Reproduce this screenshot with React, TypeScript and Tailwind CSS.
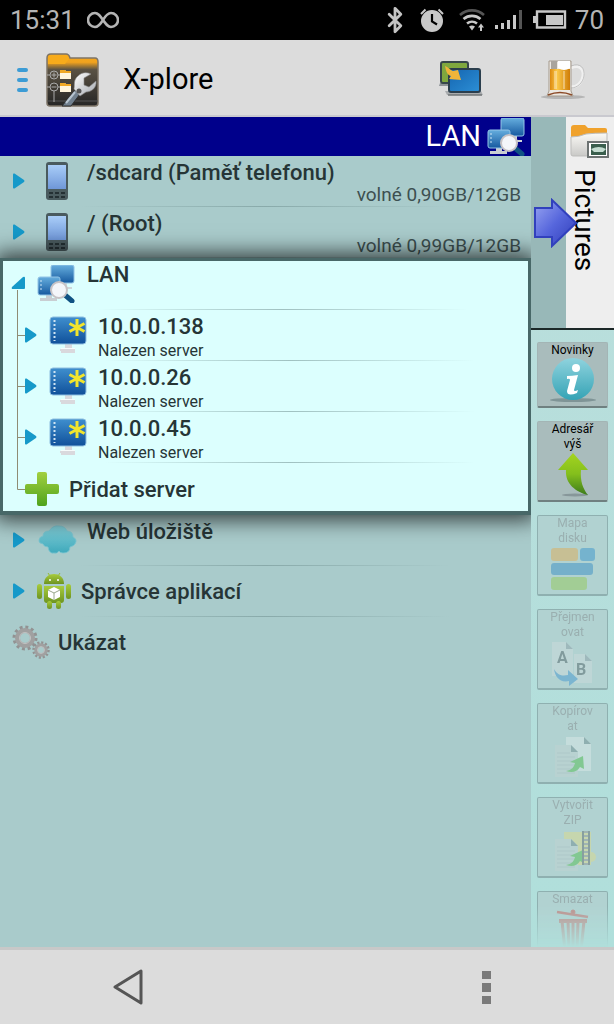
import type { ReactNode } from 'react';
import clsx from 'clsx';
import { Bluetooth } from 'lucide-react';

/* ---------- status bar icons ---------- */

function StatusIcons() {
  return (
    <div className="flex items-center">
      <Bluetooth width={28} height={28} stroke="#c4c4c4" strokeWidth={2.4} />
      <svg className="ml-2.5" width="26" height="26" viewBox="0 0 26 26" fill="none">
        <circle cx="13" cy="14" r="11" fill="#c8c8c8" />
        <path d="M2 7 6.500 2.500M24 7l-4.500-4.500" stroke="#c8c8c8" strokeWidth="2" />
        <path d="M13 7v7.500l5 3" stroke="#000" strokeWidth="2.200" />
      </svg>
      <svg className="ml-3.5" width="28" height="24" viewBox="0 0 28 24" fill="none" strokeWidth="2.600">
        <path d="M1 7a18 18 0 0 1 24 0" stroke="#555" />
        <path d="M4.500 11a13 13 0 0 1 17 0M8 15.500a8 8 0 0 1 10 0" stroke="#c8c8c8" />
        <path d="M10 18.500a5 5 0 0 1 6 0l-3 4z" fill="#c8c8c8" />
        <path d="M22 23v-5" stroke="#c8c8c8" strokeWidth="2" />
        <path d="m19 19.500 3-4 3 4z" fill="#c8c8c8" />
      </svg>
      <svg className="ml-2" width="28" height="20" viewBox="0 0 28 20" fill="#c8c8c8">
        <path d="M0 15h3v4H0zM6 13h3v6H6zM12 10h3v9h-3zM18 5h3v14h-3z" />
        <path d="M24 0h3v19h-3z" fill="#555" />
      </svg>
      <svg className="ml-2.5" width="34" height="20" viewBox="0 0 34 20" fill="none">
        <path d="M4 1.500h28v16H4z" stroke="#c8c8c8" strokeWidth="2.400" />
        <path d="M0 6h3v7H0zM13 5h17v10H13z" fill="#c8c8c8" />
      </svg>
    </div>
  );
}

function InfinityIcon() {
  return (
    <svg width="32" height="18" viewBox="0 0 32 18" fill="none" stroke="#b4b4b4" strokeWidth="2.600">
      <path d="M16 9C12.500 4 11 2 8 2a7 7 0 0 0 0 14c3 0 5-2 8-7s5-7 8-7a7 7 0 0 1 0 14c-3 0-4.500-2-8-7Z" />
    </svg>
  );
}

/* ---------- app bar icons ---------- */

function AppLogo() {
  return (
    <svg width="53" height="54" viewBox="0 0 53 54">
      <defs>
        <linearGradient id="logoDark" x1="0" y1="0" x2="0" y2="1">
          <stop offset="0" stopColor="#f5a81c" />
          <stop offset=".16" stopColor="#f0a21e" />
          <stop offset=".3" stopColor="#5a5244" />
          <stop offset="1" stopColor="#262626" />
        </linearGradient>
        <linearGradient id="logoSteel" x1="0" y1="0" x2="1" y2="1">
          <stop offset="0" stopColor="#fff" />
          <stop offset="1" stopColor="#a5aab0" />
        </linearGradient>
      </defs>
      <path d="M1 5q0-4 4-4h15q3 0 4 4h25q3 0 3 4v41q0 3-3 3H4q-3 0-3-3z" fill="url(#logoDark)" stroke="#7d7467" strokeWidth="1.500" />
      <path d="M2 5q0-3 3-3h15q2 0 3 4l-4 5H2z" fill="#f7ab1b" />
      <path d="M1 48h51" stroke="#555" />
      <g stroke="#aaa" fill="none">
        <path d="M1 22h3m8 0h4M1 34h3m8 0h4M8 38v11M5.500 22h5M8 19.500v5M5.500 34h5" />
        <circle cx="8" cy="22" r="4" />
        <circle cx="8" cy="34" r="4" />
      </g>
      <path d="M14 17h5l1 1h5v8H14zM14 30h5l1 1h5v8H14z" fill="#fff5dc" />
      <path d="M14 17h5l1 1h5v2H14zM14 30h5l1 1h5v2H14z" fill="#f0a825" />
      <path d="M16 53 29 37l5 4-9 12z" fill="#71808e" stroke="#303030" />
      <path d="m20 50 9-11" stroke="#b7c4d0" strokeWidth="2" />
      <path d="M28 36c1-4-1-9 4-13 4-4 9-4 13-2l-7 4v7l5 2 7-6c1 7-5 11-10 11l-6 4z" fill="url(#logoSteel)" stroke="#888" strokeWidth=".6" />
      <circle cx="33" cy="38" r="2.500" fill="#555" />
    </svg>
  );
}

function ScreensIcon() {
  return (
    <svg width="45" height="38" viewBox="0 0 45 38">
      <defs>
        <linearGradient id="scrBlue" x1="0" y1="0" x2="1" y2="1">
          <stop offset="0" stopColor="#1565b0" />
          <stop offset="1" stopColor="#2c8fd6" />
        </linearGradient>
      </defs>
      <path d="M1 22h12v3H0z" fill="#8d9296" />
      <rect x="2" y="1" width="27" height="21" rx="2" fill="#7fa83e" stroke="#37474a" strokeWidth="2" />
      <path d="M6 30h36l2 4H8z" fill="#a9acae" />
      <path d="M9 34h34" stroke="#707476" strokeWidth="1.500" />
      <rect x="10" y="8" width="31" height="23" rx="2" fill="url(#scrBlue)" stroke="#2b3e4d" strokeWidth="2" />
      <path d="M6 5c3 1 5 4 8 5l5-1 3 10-12-1 2-3C8 14 7 10 6 5z" fill="#eeb53a" />
    </svg>
  );
}

function BeerIcon() {
  return (
    <svg width="46" height="42" viewBox="0 0 46 42">
      <defs>
        <linearGradient id="beer" x1="0" y1="0" x2="1" y2="0">
          <stop offset="0" stopColor="#dd8a10" />
          <stop offset=".35" stopColor="#fbc94a" />
          <stop offset="1" stopColor="#cf7d08" />
        </linearGradient>
      </defs>
      <ellipse cx="23" cy="38" rx="22" ry="2" fill="#b5b5b5" />
      <path d="M31 9c8-4 13 1 12 8s-6 11-12 11" fill="none" stroke="#f0f0f0" strokeWidth="3" />
      <path d="M31 7c10-4 14 3 13 10s-7 12-13 12" fill="none" stroke="#b4b4b4" strokeWidth=".8" />
      <path d="M9 2h22v30l2 5H7l2-5z" fill="#ece8e2" stroke="#a59a8d" />
      <path d="M10 10h20v21H10z" fill="url(#beer)" />
      <path d="M11 2h6v8h-6z" fill="#a9a49c" />
      <path d="M14 12h3v18h-3zM23 12h2v18h-2z" fill="#fff" opacity=".35" />
      <path d="M18 2h12v7q-6 4-12 0z" fill="#fff" />
      <path d="M8 36q12-5 24 0" stroke="#8b4a28" strokeWidth="1.500" fill="none" />
    </svg>
  );
}

/* ---------- tree icons ---------- */

function Arrow() {
  return (
    <svg className="shrink-0" width="12" height="16" viewBox="0 0 12 16">
      <path d="M0 1.500Q0 0 1.500.6L11 7q1 1 0 2l-9.500 6.400Q0 16 0 14.500z" fill="#1699c9" />
    </svg>
  );
}

function PhoneIcon() {
  return (
    <svg width="22" height="38" viewBox="0 0 22 38">
      <defs>
        <linearGradient id="phoneScreen" x1="0" y1="0" x2="0" y2="1">
          <stop offset="0" stopColor="#a9cdf8" />
          <stop offset="1" stopColor="#6f97d8" />
        </linearGradient>
      </defs>
      <rect width="22" height="38" rx="3" fill="#4a5b5f" />
      <rect x="2" y="3" width="18" height="24" fill="url(#phoneScreen)" />
      <path d="M3 30h4v2H3zm6 0h4v2H9zm6 0h4v2h-4zM3 34h4v2H3zm6 0h4v2H9zm6 0h4v2h-4z" fill="#243034" />
    </svg>
  );
}

function LanIcon() {
  return (
    <svg width="38" height="38" viewBox="0 0 38 38">
      <defs>
        <linearGradient id="lanBlue" x1="0" y1="0" x2="0" y2="1">
          <stop offset="0" stopColor="#66aede" />
          <stop offset="1" stopColor="#16599f" />
        </linearGradient>
      </defs>
      <path d="M25 17h5v5h5v2H20v-2h5z" fill="#cfd6da" />
      <rect x="14" y="0" width="23" height="18" rx="2" fill="url(#lanBlue)" stroke="#93c4e6" />
      <path d="M9 29h6v4h5v3H3v-3h6z" fill="#c9ced2" />
      <rect x="1" y="12" width="22" height="18" rx="2" fill="url(#lanBlue)" stroke="#93c4e6" />
      <path d="M4 15v12" stroke="#cfe6f5" strokeDasharray="2 2" />
      <path d="m28 30 7 6" stroke="#0f5283" strokeWidth="5" strokeLinecap="round" />
      <circle cx="22" cy="25" r="8" fill="#f4f6fa" stroke="#c7c3c6" strokeWidth="2" />
    </svg>
  );
}

function ServerIcon() {
  return (
    <svg className="shrink-0" width="38" height="38" viewBox="0 0 38 38">
      <defs>
        <linearGradient id="srvBlue" x1="0" y1="0" x2="0" y2="1">
          <stop offset="0" stopColor="#3f8fce" />
          <stop offset="1" stopColor="#10509a" />
        </linearGradient>
      </defs>
      <path d="M16 28h7v4h3v5H12v-2h-1v-2h5z" fill="#d9d9dd" />
      <path d="M12 32.500h14" stroke="#f7fbfb" />
      <rect x="1" y="1" width="36" height="27" rx="3" fill="url(#srvBlue)" stroke="#8fbfe0" />
      <path d="M5.500 4v21" stroke="#cfe3f2" strokeWidth="2" strokeDasharray="2 2" />
      <path d="M28 3v17M20.500 7.500l15 8M35.500 7.500l-15 8" stroke="#f2e52c" strokeWidth="3" />
    </svg>
  );
}

function CloudIcon() {
  return (
    <svg width="39" height="30" viewBox="0 0 39 30">
      <defs>
        <linearGradient id="cloud" x1="0" y1="0" x2="0" y2="1">
          <stop offset="0" stopColor="#84d2dc" />
          <stop offset="1" stopColor="#3fa9bb" />
        </linearGradient>
      </defs>
      <path
        d="M11 6Q15 0 21 1q6 0 8 5 6 0 6 6 4 2 3 5-1 4-6 5 0 6-7 6-3 0-4-2-2 3-5 2-5 1-6-6-4 0-5-3-5-1-4-4 0-3 4-4 0-5 6-5z"
        fill="url(#cloud)"
        stroke="#7cc5d0"
        strokeWidth=".8"
      />
    </svg>
  );
}

function AndroidIcon() {
  return (
    <svg width="34" height="38" viewBox="0 0 34 38">
      <defs>
        <linearGradient id="droid" x1="0" y1="0" x2="0" y2="1">
          <stop offset="0" stopColor="#a8cc3c" />
          <stop offset="1" stopColor="#6d9420" />
        </linearGradient>
      </defs>
      <path d="m11 1 2 3m10-3-2 3" stroke="#94b934" />
      <g fill="url(#droid)">
        <path d="M7 12C7 5 12 2 17 2s10 3 10 10z" />
        <path d="M7 14h20v14q0 3-3 3H10q-3 0-3-3z" />
        <rect x="0" y="12" width="5" height="15" rx="2.500" />
        <rect x="29" y="12" width="5" height="15" rx="2.500" />
        <rect x="10" y="29" width="5" height="8" rx="2.500" />
        <rect x="19" y="29" width="5" height="8" rx="2.500" />
      </g>
      <circle cx="13" cy="8" r="1" fill="#fff" />
      <circle cx="21" cy="8" r="1" fill="#fff" />
      <path d="m17 15 6 3v7l-6 3-6-3v-7z" fill="#fff" />
      <path d="m11 18 6 3 6-3m-6 3v7" stroke="#9aa88c" fill="none" />
    </svg>
  );
}

function GearsIcon() {
  return (
    <svg width="38" height="34" viewBox="0 0 38 34" fill="none">
      <circle cx="13" cy="13" r="10.500" stroke="#929292" strokeWidth="4" strokeDasharray="2.800 2.700" />
      <circle cx="13" cy="13" r="7.500" stroke="#a0a0a0" strokeWidth="5" />
      <circle cx="13" cy="13" r="5.500" stroke="#c2c2c2" />
      <circle cx="29" cy="25" r="7" stroke="#929292" strokeWidth="3.500" strokeDasharray="2 1.660" />
      <circle cx="29" cy="25" r="5" stroke="#a0a0a0" strokeWidth="3.500" />
      <circle cx="29" cy="25" r="3.500" stroke="#bebebe" />
    </svg>
  );
}

function PlusIcon() {
  return (
    <svg className="shrink-0" width="34" height="34" viewBox="0 0 34 34">
      <defs>
        <linearGradient id="plus" x1="0" y1="0" x2="0" y2="1">
          <stop offset="0" stopColor="#a2d040" />
          <stop offset="1" stopColor="#4fa31c" />
        </linearGradient>
      </defs>
      <path
        d="M14 0h6q2 0 2 2v10h10q2 0 2 2v6q0 2-2 2H22v10q0 2-2 2h-6q-2 0-2-2V22H2q-2 0-2-2v-6q0-2 2-2h10V2q0-2 2-2z"
        fill="url(#plus)"
      />
    </svg>
  );
}

// piece of the tree line left of a child node
function Branch({ last }: { last?: boolean }) {
  return (
    <svg className="ml-3.5 shrink-0 self-start" width="8" height="51" viewBox="0 0 8 51" fill="none" stroke="#8f8c74">
      <path d={last ? 'M.5 0v26.500H8' : 'M.5 0v51M.5 25.500H8'} />
    </svg>
  );
}

/* ---------- tree ---------- */

function Separator() {
  return <div className="ml-20 h-px w-[370px] shrink-0 bg-linear-to-r from-transparent via-[#6f8f8f]/55 to-transparent" />;
}

function DeviceRow({ icon, title, info }: { icon: ReactNode; title: string; info?: string }) {
  return (
    <li>
      <button aria-expanded={false} className="flex h-[50px] w-full items-center pl-[13px] text-left">
        <Arrow />
        <span className="ml-3 flex w-10 shrink-0 justify-center">{icon}</span>
        <span className="flex flex-1 flex-col self-start pt-[3px] pr-2.5 pl-2.5">
          <span className="text-[22px] leading-7 font-medium">{title}</span>
          {info && <span className="self-end text-[19px] leading-4 text-[#3d5051]">{info}</span>}
        </span>
      </button>
      <Separator />
    </li>
  );
}

function ServerRow({ address }: { address: string }) {
  return (
    <li className="flex h-[51px]">
      <Branch />
      <div className="flex-1">
        <button aria-expanded={false} className="flex h-[50px] w-full items-center text-left">
          <Arrow />
          <span className="ml-3">
            <ServerIcon />
          </span>
          <span className="ml-[11px] flex flex-col self-start pt-[3px]">
            <span className="text-[22px] leading-7 font-medium">{address}</span>
            <span className="text-[16px] leading-5">Nalezen server</span>
          </span>
        </button>
        <Separator />
      </div>
    </li>
  );
}

function LanGroup() {
  return (
    <li className="relative border-3 border-b-4 border-[#486868] bg-[#dcfffe] shadow-[0_0_20px_5px_rgba(0,0,0,0.7)]">
      <button aria-expanded className="flex h-12 w-full text-left">
        <svg className="ml-2 shrink-0" width="15" height="48" viewBox="0 0 15 48">
          <path d="M6.500 29v19" stroke="#8f8c74" />
          <path d="M12 16q2-1 2 1v10q0 1-1 1H2q-2 0-1-2z" fill="#1699c9" />
        </svg>
        <span className="ml-[11px] pt-1">
          <LanIcon />
        </span>
        <span className="ml-3 text-[22px] leading-7 font-medium">LAN</span>
      </button>
      <div className="flex">
        <span className="ml-3.5 w-px bg-[#8f8c74]" />
        <Separator />
      </div>
      <ul>
        <ServerRow address="10.0.0.138" />
        <ServerRow address="10.0.0.26" />
        <ServerRow address="10.0.0.45" />
        <li className="flex h-12 overflow-hidden">
          <Branch last />
          <button className="flex flex-1 items-center gap-2.5 pt-1 text-left text-[22px] font-medium">
            <PlusIcon />
            Přidat server
          </button>
        </li>
      </ul>
    </li>
  );
}

/* ---------- side toolbar ---------- */

function InfoIcon() {
  return (
    <svg width="48" height="48" viewBox="0 0 48 48">
      <defs>
        <linearGradient id="info" x1="0" y1="0" x2="0" y2="1">
          <stop offset="0" stopColor="#8fd3de" />
          <stop offset="1" stopColor="#35a3b5" />
        </linearGradient>
      </defs>
      <ellipse cx="24" cy="42" rx="23" ry="2" fill="#7f9496" />
      <circle cx="24" cy="21" r="21" fill="url(#info)" />
      <circle cx="27" cy="10" r="4" fill="#fff" />
      <path d="M18 18q5 0 11-1l-4 15q0 2 4 0l-1 3q-10 4-10-2l3-11q0-2-3-1z" fill="#fff" />
    </svg>
  );
}

function UpIcon() {
  return (
    <svg width="48" height="48" viewBox="0 0 48 48">
      <defs>
        <linearGradient id="up" x1="0" y1="0" x2="0" y2="1">
          <stop offset="0" stopColor="#a4d420" />
          <stop offset=".5" stopColor="#84bf1c" />
          <stop offset="1" stopColor="#3c7c1c" />
        </linearGradient>
      </defs>
      <ellipse cx="26" cy="43" rx="13" ry="1.500" fill="#87979a" />
      <path d="M24 1 39 18h-7c-1 11 2 19 7 25-12-3-23-11-22-25H9z" fill="url(#up)" />
    </svg>
  );
}

function DiskMapIcon() {
  return (
    <svg width="48" height="48" viewBox="0 0 48 48">
      <rect x="2" y="2" width="27" height="13" rx="3" fill="#e8a33a" />
      <rect x="31" y="2" width="15" height="13" rx="3" fill="#1d86cc" />
      <rect x="2" y="17" width="42" height="12" rx="3" fill="#1d7fc0" />
      <rect x="2" y="31" width="36" height="13" rx="3" fill="#8cc63c" />
    </svg>
  );
}

function RenameIcon() {
  return (
    <svg width="48" height="48" viewBox="0 0 48 48">
      <path d="M3 2h14l7 7v27H3zM25 14h11l7 7v22H25z" fill="#d3dedf" />
      <path d="M17 2v7h7zM36 14v7h7z" fill="#83969e" />
      <g fill="#3c4a50" fontFamily="Roboto, sans-serif" fontWeight="700" fontSize="16">
        <text x="8" y="23">A</text>
        <text x="27" y="35">B</text>
      </g>
      <path d="M5 29c4 7 9 7 14 6v-5l10 9-9 7v-5C11 43 6 37 5 29z" fill="#2d8bd0" />
    </svg>
  );
}

function Sheets() {
  return (
    <>
      <path d="M17 3h18l7 7v27H17z" fill="#e3eeee" />
      <path d="M6 11h16l7 7v25H6z" fill="#c3d3d3" />
      <path d="M8 19h13M8 23h18M8 27h18M8 31h18M8 35h18M8 39h18" stroke="#a9bbbd" />
      <path d="M22 11v7h7z" fill="#5e7c80" />
    </>
  );
}

const copyArrow = 'M17 37c6-1 8-4 9-8l-5-1 13-6 1 13-4-2c-3 5-8 6-14 4z';

function CopyIcon() {
  return (
    <svg width="48" height="48" viewBox="0 0 48 48">
      <Sheets />
      <path d="M35 3v7h7z" fill="#5e7c80" />
      <path d={copyArrow} fill="#3dba35" />
    </svg>
  );
}

function ZipIcon() {
  return (
    <svg width="48" height="48" viewBox="0 0 48 48">
      <path d="M15 4h27v33H15z" fill="#e6dc7c" />
      <circle cx="42" cy="29" r="5" fill="#e6dc7c" />
      <path d="M6 11h16l7 7v25H6z" fill="#c3d3d3" />
      <path d="M8 19h13M8 23h18M8 27h18M8 31h18M8 35h18M8 39h18" stroke="#a9bbbd" />
      <path d="M22 11v7h7z" fill="#5e7c80" />
      <path d={copyArrow} fill="#3dba35" />
      <path d="M34 3v34M40 3v34" stroke="#4c5557" strokeWidth="2" />
      <path d="M37 3v34" stroke="#888" strokeWidth="4" strokeDasharray="2 2" />
    </svg>
  );
}

function TrashIcon() {
  return (
    <svg width="48" height="48" viewBox="0 0 48 48" fill="none" stroke="#d2322c">
      <path d="m8 5 31 5" strokeWidth="2.500" />
      <circle cx="24" cy="5" r="2" fill="#d2322c" />
      <path d="M10 14h28" strokeWidth="4" />
      <path d="m13 14 3 30m8-30v30m11-30-3 30M19 14l1 30m9-30-1 30" strokeWidth="3" />
    </svg>
  );
}

interface ToolProps {
  lines: string[];
  icon: ReactNode;
  disabled?: boolean;
}

const TOOLS: ToolProps[] = [
  { lines: ['Novinky'], icon: <InfoIcon /> },
  { lines: ['Adresář', 'výš'], icon: <UpIcon /> },
  { lines: ['Mapa', 'disku'], icon: <DiskMapIcon />, disabled: true },
  { lines: ['Přejmen', 'ovat'], icon: <RenameIcon />, disabled: true },
  { lines: ['Kopírov', 'at'], icon: <CopyIcon />, disabled: true },
  { lines: ['Vytvořit', 'ZIP'], icon: <ZipIcon />, disabled: true },
  { lines: ['Smazat'], icon: <TrashIcon />, disabled: true },
];

function Tool({ lines, icon, disabled }: ToolProps) {
  return (
    <button
      disabled={disabled}
      className={clsx(
        'flex w-full shrink-0 flex-col items-center rounded-xs border border-b-2 text-[12px] leading-[15px]',
        disabled ? 'border-[#8fb0b0] bg-[#b1d2d1] text-[#9aafb0]' : 'border-[#a3b5b5] border-b-[#6f8080] bg-[#a9bcbc] text-black',
      )}
    >
      {lines.map((line) => (
        <span key={line}>{line}</span>
      ))}
      <span className={clsx(disabled && 'opacity-40')}>{icon}</span>
    </button>
  );
}

function PicturesTab() {
  return (
    <button className="relative flex h-[213px] w-full shrink-0 border-b-2 border-[#1c2828] bg-[#98b8b8]">
      <span className="ml-auto flex w-12 flex-col items-center bg-[#eeeeee] pt-1.5">
        <svg className="shrink-0" width="40" height="38" viewBox="0 0 40 38">
          <defs>
            <linearGradient id="folder" x1="0" y1="0" x2="0" y2="1">
              <stop offset="0" stopColor="#fbfaf6" />
              <stop offset="1" stopColor="#c9c9c7" />
            </linearGradient>
          </defs>
          <path d="M1 5q0-3 3-3h11l3 3h17q2 0 2 2v12H1z" fill="#f0a22c" />
          <path d="M1 14q8 0 15-3 8-1 21-1v21q0 2-2 2H3q-2 0-2-2z" fill="url(#folder)" stroke="#bdbdbb" />
          <path d="M18 19h20v15H18z" fill="#fff" stroke="#6d7372" strokeWidth="2" />
          <path d="M21 21h15v11H21z" fill="#3a5f4d" />
          <path d="M21 26q8-4 15 0l-3 3h-9z" fill="#c4dcd0" />
        </svg>
        <span className="mt-2 pr-3 text-[28px] leading-8 text-black [writing-mode:vertical-rl]">Pictures</span>
      </span>
      <svg className="absolute top-[81px] left-[3px]" width="43" height="50" viewBox="0 0 43 50">
        <defs>
          <linearGradient id="blueArrow" x1="0" y1="0" x2="1" y2="1">
            <stop offset="0" stopColor="#9aa6f2" />
            <stop offset=".5" stopColor="#5666dc" />
            <stop offset="1" stopColor="#2f3cb8" />
          </linearGradient>
        </defs>
        <path d="M1 10h17V2l24 23-24 23v-9H1z" fill="url(#blueArrow)" stroke="#3140bd" strokeWidth="2" />
      </svg>
    </button>
  );
}

export default function App() {
  return (
    <div className="flex h-screen flex-col overflow-hidden bg-[#dcdcdc] font-[Roboto,sans-serif] text-[#263536]">
      <div className="flex h-10 shrink-0 items-center bg-black px-2.5 text-[26px] text-[#b4b4b4]">
        <span>15:31</span>
        <span className="ml-3">
          <InfinityIcon />
        </span>
        <div className="ml-auto flex items-center gap-2">
          <StatusIcons />
          <span>70</span>
        </div>
      </div>

      <header className="flex h-[77px] shrink-0 items-center border-b-2 border-[#c9c9cf] pt-1 pr-7">
        <button aria-label="Menu" className="ml-[17px] flex flex-col gap-1.5">
          <span className="h-1 w-[11px] rounded-full bg-[#3d9cd5]" />
          <span className="h-1 w-[11px] rounded-full bg-[#3d9cd5]" />
          <span className="h-1 w-[11px] rounded-full bg-[#3d9cd5]" />
        </button>
        <span className="ml-[18px]">
          <AppLogo />
        </span>
        <h1 className="ml-6 text-[29px] text-black">X-plore</h1>
        <button aria-label="Screens" className="ml-auto">
          <ScreensIcon />
        </button>
        <button aria-label="Donate" className="ml-14">
          <BeerIcon />
        </button>
      </header>

      <div className="flex min-h-0 flex-1">
        <main className="min-w-0 flex-1 overflow-hidden bg-[#a9cbcb]">
          <div className="flex h-[39px] items-center justify-end gap-1.5 bg-[#00008b] pr-1.5 text-[29px] text-white">
            LAN
            <LanIcon />
          </div>
          <ul>
            <DeviceRow icon={<PhoneIcon />} title="/sdcard (Paměť telefonu)" info="volné 0,90GB/12GB" />
            <DeviceRow icon={<PhoneIcon />} title="/ (Root)" info="volné 0,99GB/12GB" />
            <LanGroup />
            <DeviceRow icon={<CloudIcon />} title="Web úložiště" />
            <li>
              <button aria-expanded={false} className="flex h-[50px] w-full items-center pl-[13px] text-left">
                <Arrow />
                <span className="ml-3">
                  <AndroidIcon />
                </span>
                <span className="ml-2.5 text-[22px] font-medium">Správce aplikací</span>
              </button>
              <Separator />
            </li>
            <li>
              <button className="flex h-[50px] w-full items-center gap-2 pl-3 text-left text-[22px] font-medium">
                <GearsIcon />
                Ukázat
              </button>
            </li>
          </ul>
        </main>

        <aside className="flex w-[83px] shrink-0 flex-col overflow-hidden bg-linear-to-b from-[#bbdedc] to-[#b0dfdb]">
          <PicturesTab />
          <div className="flex min-h-0 flex-1 flex-col gap-[13px] overflow-hidden px-1.5 pt-3 [mask-image:linear-gradient(to_bottom,black_calc(100%-40px),transparent)]">
            {TOOLS.map((tool) => (
              <Tool key={tool.lines[0]} {...tool} />
            ))}
          </div>
        </aside>
      </div>

      <nav className="flex h-[77px] shrink-0 items-center justify-around border-t-3 border-[#c8c8c8]">
        <button aria-label="Back" className="flex flex-1 justify-center pr-13">
          <svg width="32" height="36" viewBox="0 0 32 36" fill="none">
            <path d="M29 2v32L3 18z" stroke="#555" strokeWidth="3" strokeLinejoin="round" />
          </svg>
        </button>
        <button aria-label="More" className="flex flex-1 justify-center pl-13">
          <svg width="9" height="33" viewBox="0 0 9 33" fill="#7a7a7a">
            <path d="M0 0h9v8H0zM0 12h9v9H0zM0 25h9v8H0z" />
          </svg>
        </button>
      </nav>
    </div>
  );
}
